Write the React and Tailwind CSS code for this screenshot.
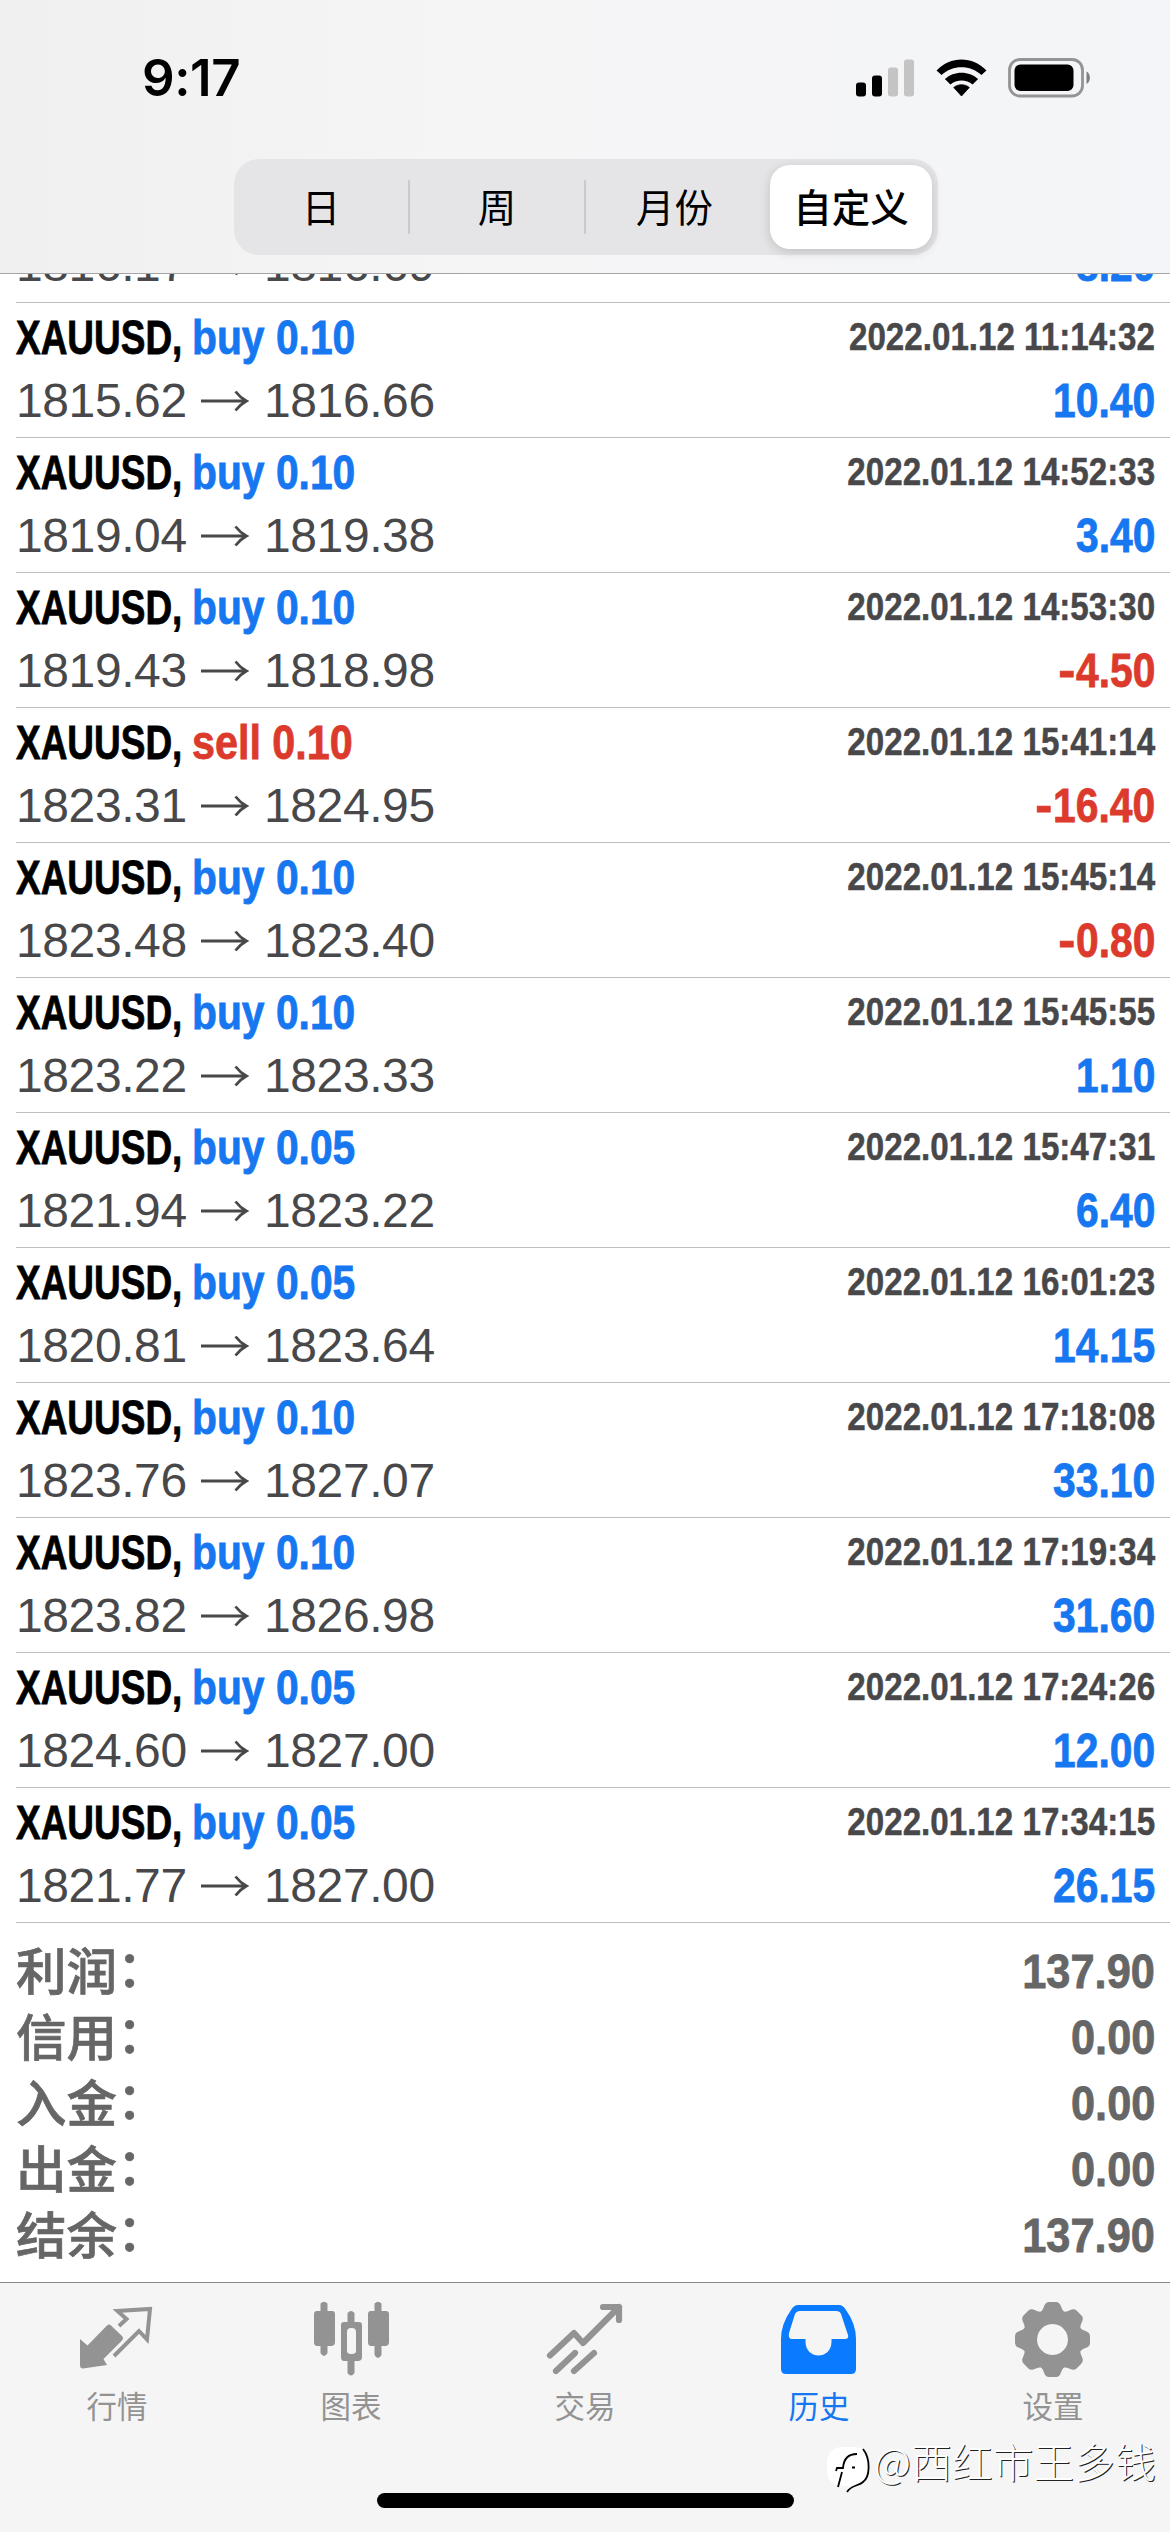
const rows = [
  ["buy", "0.10", "1815.62", "1816.66", "2022.01.12 11:14:32", "10.40"],
  ["buy", "0.10", "1819.04", "1819.38", "2022.01.12 14:52:33", "3.40"],
  ["buy", "0.10", "1819.43", "1818.98", "2022.01.12 14:53:30", "-4.50"],
  ["sell", "0.10", "1823.31", "1824.95", "2022.01.12 15:41:14", "-16.40"],
  ["buy", "0.10", "1823.48", "1823.40", "2022.01.12 15:45:14", "-0.80"],
  ["buy", "0.10", "1823.22", "1823.33", "2022.01.12 15:45:55", "1.10"],
  ["buy", "0.05", "1821.94", "1823.22", "2022.01.12 15:47:31", "6.40"],
  ["buy", "0.05", "1820.81", "1823.64", "2022.01.12 16:01:23", "14.15"],
  ["buy", "0.10", "1823.76", "1827.07", "2022.01.12 17:18:08", "33.10"],
  ["buy", "0.10", "1823.82", "1826.98", "2022.01.12 17:19:34", "31.60"],
  ["buy", "0.05", "1824.60", "1827.00", "2022.01.12 17:24:26", "12.00"],
  ["buy", "0.05", "1821.77", "1827.00", "2022.01.12 17:34:15", "26.15"],
];

const totals = [
  ["利润", "137.90"],
  ["信用", "0.00"],
  ["入金", "0.00"],
  ["出金", "0.00"],
  ["结余", "137.90"],
];

const sans = "font-['Liberation_Sans','Noto_Sans_CJK_SC',sans-serif]";
const cjk = "font-['Noto_Sans_CJK_SC',sans-serif]";

function StatusBar() {
  return (
    <div className="flex h-[159px] items-center justify-between pb-[4px] pl-[142px] pr-[79px]">
      <span className="font-['Inter',sans-serif] text-[51px] font-semibold leading-none tracking-[-0.400px] text-black">9:17</span>
      <div className="flex items-center">
        <svg width="58" height="38" viewBox="0 0 58 38">
          <rect x="0" y="23.500" width="10" height="14" rx="3" fill="#000" />
          <rect x="16" y="16.500" width="10" height="21" rx="3" fill="#000" />
          <rect x="32" y="8.500" width="10" height="29" rx="3" fill="#c4c4c5" />
          <rect x="48" y="0.500" width="10" height="37" rx="3" fill="#c4c4c5" />
        </svg>
        <svg className="ml-[22px]" width="51" height="38" viewBox="0 0 46 38" preserveAspectRatio="none">
          <path d="M0.500 11.500 C13 -3.200 33 -3.200 45.500 11.500 L41 16 C31 5.500 15 5.500 5 16Z" />
          <path d="M8 20 C16 11.500 30 11.500 38 20 L33 25.500 C27.500 20 18.500 20 13 25.500Z" />
          <path d="M16 28.500 C20 24.800 26 24.800 30 28.500 L23 37Z" stroke="#000" strokeWidth="0.8" strokeLinejoin="round" />
        </svg>
        <svg className="ml-[21px]" width="83" height="40" viewBox="0 0 83 40">
          <rect x="1.500" y="1.500" width="73" height="36.500" rx="10.500" fill="none" stroke="#949495" strokeWidth="2.800" />
          <rect x="6.500" y="6.500" width="59" height="26.500" rx="6" fill="#000" />
          <path d="M78.500 13.500 C83 15.500 83 24 78.500 26Z" fill="#7f7f80" />
        </svg>
      </div>
    </div>
  );
}

function Segments() {
  return (
    <div className={`ml-[234px] flex h-[96px] w-[704px] rounded-[25px] bg-[#e5e5e7] py-[6px] text-[38.500px] text-black ${cjk}`}>
      <div className="flex w-[174px] items-center justify-center pb-[4px] leading-none">日</div>
      <div className="my-auto h-[54px] w-[2px] rounded-full bg-[#c9c9cb]" />
      <div className="flex w-[174px] items-center justify-center pb-[4px] leading-none">周</div>
      <div className="my-auto h-[54px] w-[2px] rounded-full bg-[#c9c9cb]" />
      <div className="flex w-[177px] items-center justify-center pb-[4px] leading-none">月份</div>
      <div className="ml-[7px] flex w-[162px] items-center justify-center rounded-[20px] bg-white pb-[4px] font-medium leading-none shadow-[0_3px_12px_rgba(0,0,0,0.16)]">自定义</div>
    </div>
  );
}

function Arrow() {
  return (
    <svg className="mx-[15px] shrink-0" width="48" height="22" viewBox="0 0 48 22" fill="none" stroke="#48484a" strokeWidth="2.800">
      <path d="M0 11H45M34.500 1.500Q39 7.500 45.500 11Q39 14.500 34.500 20.500" />
    </svg>
  );
}

function Profit({ value }) {
  const negative = value.startsWith("-");
  return (
    <span className={`ml-auto origin-right scale-x-[0.85] whitespace-nowrap font-bold [-webkit-text-stroke:0.8px] ${negative ? "text-[#dc3a2c]" : "text-[#1677f0]"}`}>
      {negative && <span className="mr-[3px] inline-block scale-x-[1.25]">-</span>}
      {negative ? value.slice(1) : value}
    </span>
  );
}

function PriceLine({ from, to, profit }) {
  return (
    <div className="flex h-[48px] shrink-0 items-center text-[48px] leading-[48px]">
      <span className="w-[170px] whitespace-nowrap tracking-[-0.400px] text-[#48484a]">{from}</span>
      <Arrow />
      <span className="tracking-[-0.400px] text-[#48484a]">{to}</span>
      <Profit value={profit} />
    </div>
  );
}

function Row({ data }) {
  const [side, lots, from, to, time, profit] = data;
  return (
    <div className="ml-[16px] h-[135px] shrink-0 border-b border-[#bdbdbf] pr-[15px] pt-[11px]">
      <div className="flex h-[48px] items-start whitespace-nowrap text-[48px] font-bold leading-[48px] [-webkit-text-stroke:0.8px]">
        <span className="w-[176px]"><span className="inline-block origin-left scale-x-[0.77] text-black">XAUUSD,</span></span>
        <span className={`inline-block origin-left ${side === "sell" ? "scale-x-[0.86] text-[#dc3a2c]" : "scale-x-[0.85] text-[#1677f0]"}`}>{side} {lots}</span>
        <span className="ml-auto origin-right scale-x-[0.85] text-[39px] leading-[46px] text-[#48484a] [-webkit-text-stroke:0.5px]">{time}</span>
      </div>
      <div className="mt-[15px]"><PriceLine from={from} to={to} profit={profit} /></div>
    </div>
  );
}

function Tab({ label, active, children }) {
  return (
    <div className={`flex flex-1 flex-col items-center ${active ? "text-[#1677f0]" : "text-[#939393]"}`}>
      <svg className="overflow-visible" width="80" height="80" viewBox="0 0 80 80" fill="currentColor">{children}</svg>
      <span className="mt-[2px] text-[30.500px] leading-[40px]">{label}</span>
    </div>
  );
}

const teeth = [0, 45, 90, 135, 180, 225, 270, 315];

export default function App() {
  return (
    <div className={`flex h-[2532px] w-[1170px] flex-col overflow-hidden bg-white ${sans}`}>
      <header className="h-[274px] shrink-0 border-b border-[#a5a5a6] bg-linear-to-r from-[#f0f0f0] via-[#f5f5f6] via-40% to-[#f4f5f8]">
        <StatusBar />
        <Segments />
      </header>

      <div className="ml-[16px] flex h-[29px] shrink-0 flex-col justify-end overflow-hidden border-b border-[#bdbdbf] pb-[13px] pr-[15px]">
        <PriceLine from="1816.17" to="1816.69" profit="8.20" />
      </div>
      {rows.map((r) => <Row key={r[4]} data={r} />)}

      <div className="flex flex-col pl-[16px] pr-[15px] pt-[15px]">
        {totals.map(([label, value]) => (
          <div key={label} className="flex h-[66px] items-center justify-between text-[#666]">
            <span className={`-mt-[7px] flex text-[50.500px] font-medium leading-[66px] [-webkit-text-stroke:0.7px] ${cjk}`}>
              {label}
              <span className="-translate-y-[3px]">：</span>
            </span>
            <span className="-mt-px origin-right scale-x-[0.885] text-[49px] font-bold leading-[66px] [-webkit-text-stroke:0.8px]">{value}</span>
          </div>
        ))}
      </div>

      <footer className={`relative mt-auto h-[250px] shrink-0 border-t border-[#88888a] bg-[#f5f5f5] ${cjk}`}>
        <div className="flex pt-[20px]">
          <Tab label="行情">
            <path d="M3 36 L10.500 42.500 L30 22.500 Q32 20.500 34 22.500 L45 33 Q47 35 45 37.500 L26.500 56 L30 62 L6 65.500 Q3 65.500 3 62Z" />
            <path d="M42 23 L49.500 16 L40.500 8 L73 6 L70 36.500 L62 28 L37 53" fill="none" stroke="currentColor" strokeWidth="4" />
          </Tab>
          <Tab label="图表">
            <path d="M9.500 0.500Q13-3 16.500 0.500V8H21Q24 8 24 11V39Q24 43 20 43H16.500V50Q13 56 9.500 50V43H6Q3 43 3 39V11Q3 8 6 8H9.500Z" />
            <path d="M63.500 0.500Q67-3 70.500 0.500V8H75Q78 8 78 11V39Q78 43 74 43H70.500V52Q67 58 63.500 52V43H60Q57 43 57 39V11Q57 8 60 8H63.500Z" />
            <path fillRule="evenodd" d="M36.500 10Q40 6 43.500 10V19H48Q51 19 51 22V54Q51 58 47 58H43.500V70Q40 75 36.500 70V58H33Q30 58 30 54V22Q30 19 33 19H36.500ZM40 25Q36 25 36 29V48Q36 51 40 51H41Q45 51 45 48V29Q45 25 41 25Z" />
          </Tab>
          <Tab label="交易">
            <path d="M5 52.500L29 30L38 40L74 4M58 4H74V17M11 68L30 50M29 68L49 50" fill="none" stroke="currentColor" strokeWidth="6.200" strokeLinecap="round" strokeLinejoin="round" />
          </Tab>
          <Tab label="历史" active>
            <path transform="translate(0 1)" fill="#0a7aff" fillRule="evenodd" d="M19 1H60Q64 1 67 6Q77 20 77 35V65Q77 70 72 70H7Q2 70 2 65V35Q2 20 12 6Q15 1 19 1ZM21 7Q17.500 7 16 10L10 29Q9 35 13 35H26.500V38C27 56 52 56 52.500 38V35H66Q70 35 69 31L62 10Q61 7 57 7Z" />
          </Tab>
          <Tab label="设置">
            <g transform="translate(0 36.500)">
              <path fillRule="evenodd" d="M0 -30A30 30 0 1 1 -0.010 -30ZM0 -15.500A15.500 15.500 0 1 0 0.010 -15.500Z" transform="translate(39.500 0)" />
              {teeth.map((a) => (
                <path key={a} d="M-15 -25Q-10 -28 -8.500 -33Q-7 -37.500 -3.500 -37.500H3.500Q7 -37.500 8.500 -33Q10 -28 15 -25Z" transform={`translate(39.500 0) rotate(${a})`} />
              ))}
            </g>
          </Tab>
        </div>
        <div className="absolute left-[377px] top-[210px] h-[15px] w-[417px] rounded-full bg-black" />
        <div className="absolute left-[827px] top-[164px] flex items-start">
          <svg width="47" height="48" viewBox="0 0 47 48" fill="none" stroke="#000" strokeWidth="1.800">
            <rect x="0" y="0" width="42" height="39" rx="15" fill="#fff" stroke="none" />
            <path d="M11 40L15 25M9 24L10 21H16Q17 7 30 7M25 20.500H28M36 2C44 12 43 30 36 35C32 39 24 38 20 45" />
          </svg>
          <span className="-mt-[10px] text-[40.500px] font-light leading-[48px] tracking-[0.300px] text-white [text-shadow:1px_1px_0_#222]">@西红市王多钱</span>
        </div>
      </footer>
    </div>
  );
}
